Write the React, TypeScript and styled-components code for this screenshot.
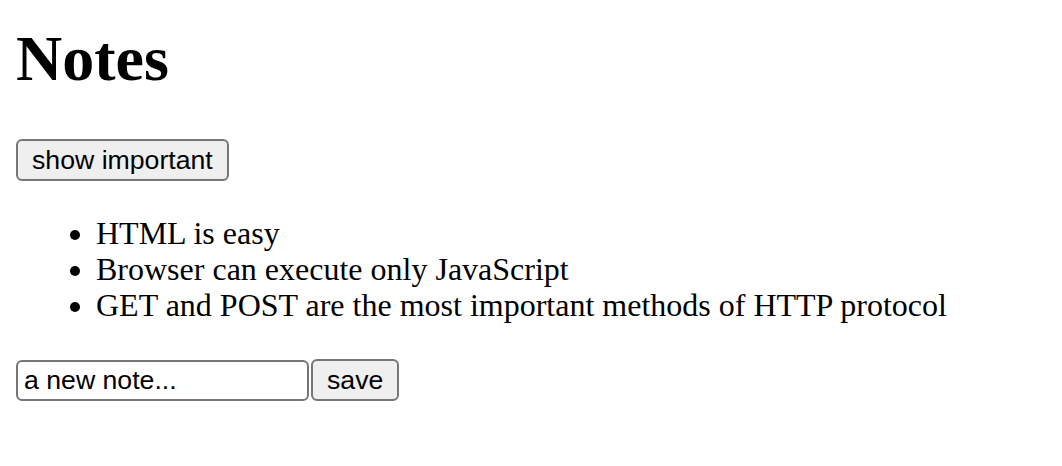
import React, { useState } from 'react'
import styled, { createGlobalStyle } from 'styled-components'

const GlobalStyle = createGlobalStyle`
  html, body {
    margin: 0;
    padding: 0;
    background: #ffffff;
  }
  body {
    font-family: "Liberation Serif", "Times New Roman", serif;
    font-size: 32px;
    line-height: 36.8px;
    color: #000000;
  }
`

type Note = { id: number; content: string; important: boolean }

const initialNotes: Note[] = [
  { id: 1, content: 'HTML is easy', important: true },
  { id: 2, content: 'Browser can execute only JavaScript', important: false },
  { id: 3, content: 'GET and POST are the most important methods of HTTP protocol', important: true },
]

const App: React.FC = () => {
  const [notes, setNotes] = useState<Note[]>(initialNotes)
  const [showAll, setShowAll] = useState(true)
  const [newNote, setNewNote] = useState('a new note...')

  const notesToShow = showAll ? notes : notes.filter((n) => n.important)

  const addNote = (event: React.FormEvent) => {
    event.preventDefault()
    setNotes(notes.concat({ id: notes.length + 1, content: newNote, important: false }))
    setNewNote('')
  }

  return (
    <Page>
      <GlobalStyle />
      <Title>Notes</Title>
      <div>
        <Button onClick={() => setShowAll(!showAll)}>
          show {showAll ? 'important' : 'all'}
        </Button>
      </div>
      <NoteList>
        {notesToShow.map((note) => (
          <NoteItem key={note.id}>{note.content}</NoteItem>
        ))}
      </NoteList>
      <NoteForm onSubmit={addNote}>
        <NoteInput value={newNote} onChange={(e) => setNewNote(e.target.value)} />
        <Button type="submit">save</Button>
      </NoteForm>
    </Page>
  )
}

export default App

const Page = styled.div`
  padding: 0 16px;
`

const Title = styled.h1`
  font-family: "Liberation Serif", "Times New Roman", serif;
  font-size: 64px;
  font-weight: bold;
  line-height: 74px;
  margin: 22px 0 43px;
`

const Button = styled.button`
  display: inline-flex;
  align-items: center;
  box-sizing: border-box;
  height: 42px;
  font-family: "Liberation Sans", Arial, sans-serif;
  font-size: 26.67px;
  color: #000000;
  background-color: #efefef;
  border: 2px solid #767676;
  border-radius: 6px;
  padding: 0 14px;
  margin: 0;
  cursor: pointer;
`

const NoteList = styled.ul`
  margin: 34px 0 33px;
  padding-left: 80px;
`

const NoteItem = styled.li`
  line-height: 36px;
`

const NoteForm = styled.form`
  display: flex;
  align-items: center;
  gap: 2px;
  padding-top: 3px;
`

const NoteInput = styled.input`
  font-family: "Liberation Sans", Arial, sans-serif;
  font-size: 26.67px;
  height: 41px;
  width: 293px;
  box-sizing: border-box;
  color: #000000;
  background: #ffffff;
  border: 2px solid #767676;
  border-radius: 6px;
  padding: 0 6px;
  margin: 0;
  outline: none;
`
